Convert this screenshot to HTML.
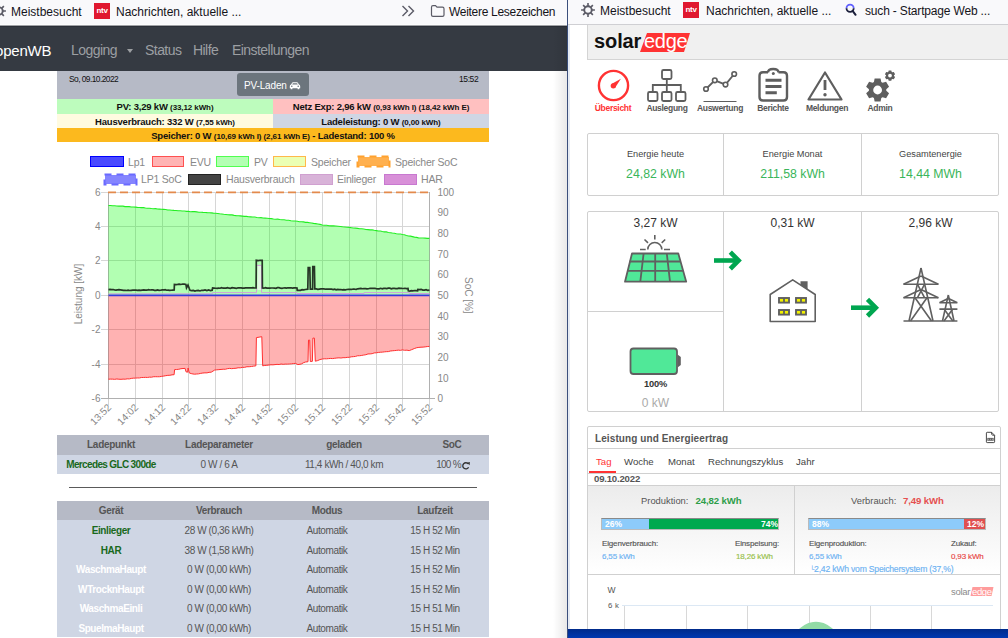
<!DOCTYPE html>
<html><head><meta charset="utf-8">
<style>
*{box-sizing:border-box;margin:0;padding:0}
html,body{width:1008px;height:638px;overflow:hidden;background:#fff;font-family:"Liberation Sans",sans-serif;position:relative}
.a{position:absolute;white-space:nowrap}
.c{text-align:center}
.lg{font-size:10.5px;color:#888;line-height:12px;letter-spacing:-0.2px}
.th{text-align:center;font-size:10px;font-weight:bold;color:#555;line-height:12px;letter-spacing:-0.3px}
.td{text-align:center;font-size:10px;color:#555;line-height:12px;letter-spacing:-0.4px}
.nl{text-align:center;font-size:8.5px;font-weight:bold;color:#555;letter-spacing:-0.3px}
.et{text-align:center;font-size:9.2px;color:#444}
.ev{text-align:center;font-size:12.3px;color:#3ab55a}
.pw{text-align:center;font-size:12px;color:#333}
.tb{font-size:9.6px;color:#444}
.bp{font-size:8.5px;font-weight:bold;color:#fff;line-height:10px}
.sm{font-size:8px;color:#444;letter-spacing:-0.15px;-webkit-text-stroke:0.15px currentColor}
.nv{top:42px;color:#9c9fa2;font-size:14px;letter-spacing:-0.55px}
.ir{font-size:9.5px;font-weight:bold;color:#111;letter-spacing:-0.2px;overflow:hidden}
.ir span{font-size:8px;letter-spacing:-0.1px}
.bm{background:#f9f9fb;color:#15141a;font-size:12px}
</style></head><body>

<!-- ============ LEFT WINDOW ============ -->
<div class="a bm" style="left:0;top:0;width:567px;height:25px;border-bottom:1px solid #fdfdfd"></div>
<!-- gear partial -->
<svg class="a" style="left:-9px;top:3px" width="16" height="16" viewBox="0 0 16 16"><circle cx="8" cy="8" r="3.75" fill="none" stroke="#5b5b66" stroke-width="1.9"/><path d="M12.00 8.00L14.90 8.00 M10.83 10.83L12.88 12.88 M8.00 12.00L8.00 14.90 M5.17 10.83L3.12 12.88 M4.00 8.00L1.10 8.00 M5.17 5.17L3.12 3.12 M8.00 4.00L8.00 1.10 M10.83 5.17L12.88 3.12" stroke="#5b5b66" stroke-width="1.6"/></svg>
<div class="a bm" style="left:11px;top:5px;font-size:12px;background:none">Meistbesucht</div>
<div class="a" style="left:94px;top:3px;width:16px;height:16px;background:#e0182f;color:#fff;font-size:8px;font-weight:bold;text-align:center;line-height:16px;letter-spacing:-0.3px">ntv</div>
<div class="a bm" style="left:116px;top:5px;background:none">Nachrichten, aktuelle ...</div>
<svg class="a" style="left:401px;top:5px" width="15" height="12" viewBox="0 0 15 12"><path d="M1.5 1 L6.5 6 L1.5 11 M7.5 1 L12.5 6 L7.5 11" fill="none" stroke="#5b5b66" stroke-width="1.4"/></svg>
<svg class="a" style="left:430px;top:5px" width="15" height="12" viewBox="0 0 15 12"><path d="M1.5 2.2 Q1.5 0.7 3 0.7 L5.5 0.7 L7 2.2 L12.5 2.2 Q14 2.2 14 3.7 L14 10 Q14 11.3 12.5 11.3 L3 11.3 Q1.5 11.3 1.5 10 Z" fill="none" stroke="#5b5b66" stroke-width="1.2"/></svg>
<div class="a bm" style="left:449px;top:5px;background:none;letter-spacing:-0.3px">Weitere Lesezeichen</div>

<!-- navbar -->
<div class="a" style="left:0;top:25px;width:567px;height:46px;background:#353a42;border-top:1px solid #a0a2a6;box-shadow:inset 0 1px 0 #2b2f37"></div>
<div class="a" style="left:-5px;top:42px;color:#fff;font-size:15px;letter-spacing:-0.2px">openWB</div>
<div class="a nv" style="left:71px">Logging</div>
<div class="a" style="left:127px;top:49px;width:0;height:0;border-left:3px solid transparent;border-right:3px solid transparent;border-top:4px solid #9c9fa2"></div>
<div class="a nv" style="left:145px">Status</div>
<div class="a nv" style="left:193px">Hilfe</div>
<div class="a nv" style="left:232px">Einstellungen</div>

<!-- openWB info header -->
<div class="a" style="left:57px;top:71px;width:432px;height:28px;background:#b6bac6"></div>
<div class="a" style="left:69px;top:73.5px;font-size:8.4px;color:#111;letter-spacing:-0.55px">So, 09.10.2022</div>
<div class="a" style="left:459px;top:74px;font-size:8.5px;color:#111;letter-spacing:-0.4px">15:52</div>
<div class="a" style="left:237px;top:73px;width:72px;height:23px;background:#6c757d;border-radius:3px"></div>
<div class="a" style="left:244px;top:79.7px;color:#fff;font-size:10px;letter-spacing:-0.15px">PV-Laden</div>
<svg class="a" style="left:289px;top:82px" width="12" height="8" viewBox="0 0 12 8"><path d="M2.1 2.6L3.1 0.8Q3.4 0.3 4 0.3H8Q8.6 0.3 8.9 0.8L9.9 2.6Q11.2 3 11.2 4.2V6.2H10.3V7.2H8.6V6.2H3.4V7.2H1.7V6.2H0.8V4.2Q0.8 3 2.1 2.6ZM3.2 2.5H8.8L8.1 1.2H3.9ZM2.8 3.5A0.8 0.8 0 1 0 2.8 5.1A0.8 0.8 0 1 0 2.8 3.5ZM9.2 3.5A0.8 0.8 0 1 0 9.2 5.1A0.8 0.8 0 1 0 9.2 3.5Z" fill="#fff" fill-rule="evenodd"/></svg>

<div class="a c ir" style="left:57px;top:99px;width:216px;height:15px;background:#bdfcbd;line-height:16px">PV: 3,29 kW <span>(33,12 kWh)</span></div>
<div class="a c ir" style="left:273px;top:99px;width:216px;height:15px;background:#ffc0c0;line-height:16px">Netz Exp: 2,96 kW <span>(0,93 kWh I) (18,42 kWh E)</span></div>
<div class="a c ir" style="left:57px;top:114px;width:216px;height:14px;background:#fffbe0;line-height:15px">Hausverbrauch: 332 W <span>(7,55 kWh)</span></div>
<div class="a c ir" style="left:273px;top:114px;width:216px;height:14px;background:#cfd6e4;line-height:15px">Ladeleistung: 0 W <span>(0,00 kWh)</span></div>
<div class="a c ir" style="left:57px;top:128px;width:432px;height:14px;background:#fcb91e;line-height:15px">Speicher: 0 W <span>(10,69 kWh I) (2,61 kWh E)</span> - Ladestand: 100 %</div>

<!-- legend -->
<div class="a" style="left:90px;top:156px;width:34px;height:11px;background:#4a4aff;border:1px solid #0000ff"></div>
<div class="a lg" style="left:128px;top:156px">Lp1</div>
<div class="a" style="left:152px;top:156px;width:32px;height:11px;background:#ffb3b3;border:1px solid #ff5050"></div>
<div class="a lg" style="left:190px;top:156px">EVU</div>
<div class="a" style="left:216px;top:156px;width:33px;height:11px;background:#b3ffb3;border:1px solid #50ff50"></div>
<div class="a lg" style="left:254px;top:156px">PV</div>
<div class="a" style="left:273px;top:156px;width:33px;height:11px;background:#ebffb3;border:1px solid #ffb84a"></div>
<div class="a lg" style="left:311px;top:156px">Speicher</div>
<svg class="a" style="left:356px;top:155px" width="35" height="13" viewBox="0 0 35 13"><rect x="2" y="2" width="31" height="9" fill="#ffb04f"/><rect x="1.5" y="1.5" width="32" height="10" fill="none" stroke="#ffa12e" stroke-width="2" stroke-dasharray="7 5"/></svg>
<div class="a lg" style="left:395px;top:156px">Speicher SoC</div>
<svg class="a" style="left:103px;top:173px" width="35" height="13" viewBox="0 0 35 13"><rect x="2" y="2" width="31" height="9" fill="#8585ff"/><rect x="1.5" y="1.5" width="32" height="10" fill="none" stroke="#6a6aff" stroke-width="2" stroke-dasharray="7 5"/></svg>
<div class="a lg" style="left:141px;top:173px">LP1 SoC</div>
<div class="a" style="left:188px;top:174px;width:33px;height:11px;background:#444;border:1px solid #222"></div>
<div class="a lg" style="left:226px;top:173px">Hausverbrauch</div>
<div class="a" style="left:300px;top:174px;width:33px;height:11px;background:#d8b3d8;border:1px solid #d0a0d0"></div>
<div class="a lg" style="left:337px;top:173px">Einlieger</div>
<div class="a" style="left:384px;top:174px;width:33px;height:11px;background:#d890d8;border:1px solid #c878d0"></div>
<div class="a lg" style="left:421px;top:173px">HAR</div>

<!-- table 1 -->
<div class="a" style="left:57px;top:435px;width:432px;height:20px;background:#b6bac6"></div>
<div class="a" style="left:57px;top:455px;width:432px;height:19px;background:#cfd6e4"></div>
<div class="a th" style="left:61px;top:439px;width:100px">Ladepunkt</div>
<div class="a th" style="left:169px;top:439px;width:100px">Ladeparameter</div>
<div class="a th" style="left:294px;top:439px;width:100px">geladen</div>
<div class="a th" style="left:402px;top:439px;width:100px">SoC</div>
<div class="a td" style="left:61px;top:459px;width:100px;color:#19691c;font-weight:bold;letter-spacing:-0.65px">Mercedes GLC 300de</div>
<div class="a td" style="left:169px;top:459px;width:100px">0 W / 6 A</div>
<div class="a td" style="left:294px;top:459px;width:100px">11,4 kWh / 40,0 km</div>
<div class="a td" style="left:360px;top:459px;width:101px;text-align:right;letter-spacing:-0.7px">100 %</div>
<svg class="a" style="left:461px;top:461px" width="10" height="9" viewBox="0 0 10 9"><path d="M7.3 2.9A3.1 3.1 0 1 0 7.6 6.3" fill="none" stroke="#333" stroke-width="1.3"/><path d="M5.9 1.7L8.9 1L8.6 4.3Z" fill="#333"/></svg>
<div class="a" style="left:69px;top:487px;width:408px;height:1px;background:#5a5a5a"></div>

<!-- table 2 -->
<div class="a" style="left:57px;top:501px;width:432px;height:19px;background:#b6bac6"></div>
<div class="a" style="left:57px;top:520px;width:432px;height:117px;background:#cfd6e4"></div>
<div class="a th" style="left:61px;top:505px;width:100px">Gerät</div>
<div class="a th" style="left:169px;top:505px;width:100px">Verbrauch</div>
<div class="a th" style="left:277px;top:505px;width:100px">Modus</div>
<div class="a th" style="left:385px;top:505px;width:100px">Laufzeit</div>
<div class="a td" style="left:61px;top:525.0px;width:100px;color:#19691c;font-weight:bold">Einlieger</div>
<div class="a td" style="left:169px;top:525.0px;width:100px">28 W (0,36 kWh)</div>
<div class="a td" style="left:277px;top:525.0px;width:100px">Automatik</div>
<div class="a td" style="left:385px;top:525.0px;width:100px">15 H 52 Min</div>
<div class="a td" style="left:61px;top:544.5px;width:100px;color:#19691c;font-weight:bold">HAR</div>
<div class="a td" style="left:169px;top:544.5px;width:100px">38 W (1,58 kWh)</div>
<div class="a td" style="left:277px;top:544.5px;width:100px">Automatik</div>
<div class="a td" style="left:385px;top:544.5px;width:100px">15 H 52 Min</div>
<div class="a td" style="left:61px;top:564.0px;width:100px;color:#fff;font-weight:bold">WaschmaHaupt</div>
<div class="a td" style="left:169px;top:564.0px;width:100px">0 W (0,00 kWh)</div>
<div class="a td" style="left:277px;top:564.0px;width:100px">Automatik</div>
<div class="a td" style="left:385px;top:564.0px;width:100px">15 H 52 Min</div>
<div class="a td" style="left:61px;top:583.5px;width:100px;color:#fff;font-weight:bold">WTrocknHaupt</div>
<div class="a td" style="left:169px;top:583.5px;width:100px">0 W (0,00 kWh)</div>
<div class="a td" style="left:277px;top:583.5px;width:100px">Automatik</div>
<div class="a td" style="left:385px;top:583.5px;width:100px">15 H 52 Min</div>
<div class="a td" style="left:61px;top:603.0px;width:100px;color:#fff;font-weight:bold">WaschmaEinli</div>
<div class="a td" style="left:169px;top:603.0px;width:100px">0 W (0,00 kWh)</div>
<div class="a td" style="left:277px;top:603.0px;width:100px">Automatik</div>
<div class="a td" style="left:385px;top:603.0px;width:100px">15 H 51 Min</div>
<div class="a td" style="left:61px;top:622.5px;width:100px;color:#fff;font-weight:bold">SpuelmaHaupt</div>
<div class="a td" style="left:169px;top:622.5px;width:100px">0 W (0,00 kWh)</div>
<div class="a td" style="left:277px;top:622.5px;width:100px">Automatik</div>
<div class="a td" style="left:385px;top:622.5px;width:100px">15 H 51 Min</div>

<!--CHART-->
<svg class="a" style="left:57px;top:145px" width="432" height="290" viewBox="57 145 432 290" font-family="Liberation Sans" shape-rendering="auto">
<path d="M108.5 192V405 M135.5 192V405 M162.5 192V405 M188.5 192V405 M215.5 192V405 M242.5 192V405 M269.5 192V405 M295.5 192V405 M322.5 192V405 M349.5 192V405 M376.5 192V405 M402.5 192V405 M429.5 192V405 M101 192.5H429.5 M101 226.5H429.5 M101 260.5H429.5 M101 295.5H429.5 M101 329.5H429.5 M101 364.5H429.5 M101 398.5H429.5" stroke="#d6d6d6" stroke-width="1" fill="none" shape-rendering="crispEdges"/>
<path d="M108.5 192V398.5M429.5 192V398.5M101 398.5H435" stroke="#b0b0b0" stroke-width="1" fill="none" shape-rendering="crispEdges"/>
<path d="M108.5 295.25 L108.4 205.5 L135.4 207.1 L161.5 209.3 L188.5 211.4 L215.5 213.2 L242.4 216.1 L269.2 218.5 L281.9 219.7 L295.4 221 L315.6 223.6 L322.3 225 L335.8 226 L349.3 227.4 L376.3 230.6 L402.4 234.5 L418.5 237.9 L429.4 238.4 L429.5 295.25Z" fill="rgba(0,255,0,0.3)"/>
<path d="M108.4 205.5 L110.48 205.52 L112.55 205.76 L114.63 205.82 L116.71 206.03 L118.78 206.17 L120.86 206.06 L122.94 206.17 L125.02 206.62 L127.09 206.51 L129.17 206.62 L131.25 207.05 L133.32 206.97 L135.4 207.1 L137.41 207.4 L139.42 207.43 L141.42 207.66 L143.43 207.64 L145.44 208.0 L147.45 208.26 L149.45 208.29 L151.46 208.55 L153.47 208.69 L155.48 208.62 L157.48 209.06 L159.49 209.17 L161.5 209.3 L163.58 209.38 L165.65 209.44 L167.73 209.93 L169.81 209.94 L171.88 210.2 L173.96 210.42 L176.04 210.52 L178.12 210.76 L180.19 210.71 L182.27 211.04 L184.35 211.05 L186.42 211.41 L188.5 211.4 L190.58 211.69 L192.65 211.52 L194.73 211.67 L196.81 211.84 L198.88 212.28 L200.96 212.21 L203.04 212.42 L205.12 212.43 L207.19 212.65 L209.27 212.74 L211.35 212.86 L213.42 213.1 L215.5 213.2 L217.57 213.46 L219.64 213.81 L221.71 213.94 L223.78 214.26 L225.85 214.46 L227.92 214.73 L229.98 214.83 L232.05 214.85 L234.12 215.35 L236.19 215.62 L238.26 215.82 L240.33 215.9 L242.4 216.1 L244.46 216.37 L246.52 216.35 L248.58 216.79 L250.65 216.87 L252.71 216.94 L254.77 217.03 L256.83 217.53 L258.89 217.77 L260.95 217.6 L263.02 218.07 L265.08 218.09 L267.14 218.18 L269.2 218.5 L271.32 218.62 L273.43 219.01 L275.55 219.25 L277.67 219.12 L279.78 219.55 L281.9 219.7 L284.15 219.73 L286.4 220.22 L288.65 220.28 L290.9 220.72 L293.15 220.98 L295.4 221 L297.42 221.26 L299.44 221.72 L301.46 221.7 L303.48 221.87 L305.5 222.34 L307.52 222.37 L309.54 222.7 L311.56 223.04 L313.58 223.38 L315.6 223.6 L317.83 223.93 L320.07 224.35 L322.3 225 L324.55 225.31 L326.8 225.26 L329.05 225.68 L331.3 225.83 L333.55 225.78 L335.8 226 L338.05 226.22 L340.3 226.47 L342.55 226.76 L344.8 226.97 L347.05 227.19 L349.3 227.4 L351.38 227.69 L353.45 228.07 L355.53 228.14 L357.61 228.36 L359.68 228.72 L361.76 228.77 L363.84 229.04 L365.92 229.56 L367.99 229.62 L370.07 229.88 L372.15 229.91 L374.22 230.32 L376.3 230.6 L378.31 230.93 L380.32 231.01 L382.32 231.55 L384.33 231.85 L386.34 231.92 L388.35 232.45 L390.35 232.69 L392.36 233.07 L394.37 233.24 L396.38 233.68 L398.38 234.0 L400.39 234.01 L402.4 234.5 L404.41 234.75 L406.42 235.42 L408.44 235.96 L410.45 236.1 L412.46 236.61 L414.48 237.09 L416.49 237.4 L418.5 237.9 L420.68 237.95 L422.86 238.03 L425.04 238.15 L427.22 238.34 L429.4 238.4" fill="none" stroke="#22ee22" stroke-width="1.1"/>
<path d="M108.5 295.25 L108.4 379.2 L125.2 379.2 L135.4 378.1 L161.5 376.4 L174.1 374.7 L174.6 369.6 L185.1 368.4 L186 371.8 L187.6 372.2 L188.1 368 L189.3 373 L194.4 374.2 L211.2 372.2 L214.6 370.1 L242.4 367.4 L255.9 365.8 L256.4 337.6 L261.8 336.7 L262.7 365.8 L275 364.6 L295.4 363.4 L297.9 364.6 L301.3 364 L305.5 362 L308 361.7 L308.5 340.1 L309.7 340.1 L310.3 361.5 L312.4 361.3 L312.9 338.1 L314.4 338.1 L315.3 361.2 L322.3 359 L349.3 357.3 L376.3 352.8 L402.4 349.9 L409.2 350.6 L416.8 347.7 L429.4 346.4 L429.5 295.25Z" fill="rgba(255,0,0,0.3)"/>
<path d="M108.4 379.2 L110.5 379.1 L112.6 379.14 L114.7 379.34 L116.8 378.96 L118.9 379.23 L121.0 379.32 L123.1 379.11 L125.2 379.2 L127.24 378.84 L129.28 378.91 L131.32 378.41 L133.36 378.16 L135.4 378.1 L137.41 377.94 L139.42 377.94 L141.42 377.51 L143.43 377.49 L145.44 377.36 L147.45 377.48 L149.45 377.15 L151.46 377.23 L153.47 376.76 L155.48 376.71 L157.48 376.74 L159.49 376.72 L161.5 376.4 L163.6 376.09 L165.7 375.7 L167.8 375.36 L169.9 375.28 L172.0 374.83 L174.1 374.7 L174.6 369.6 L176.7 369.51 L178.8 369.29 L180.9 368.72 L183.0 368.53 L185.1 368.4 L186 371.8 L187.6 372.2 L188.1 368 L189.3 373 L191.85 373.75 L194.4 374.2 L196.5 374.02 L198.6 373.85 L200.7 373.37 L202.8 373.01 L204.9 372.85 L207.0 372.85 L209.1 372.34 L211.2 372.2 L214.6 370.1 L216.74 369.82 L218.88 369.64 L221.02 369.44 L223.15 369.22 L225.29 369.27 L227.43 368.68 L229.57 368.4 L231.71 368.66 L233.85 368.42 L235.98 368.27 L238.12 367.78 L240.26 367.83 L242.4 367.4 L244.65 367.35 L246.9 366.73 L249.15 366.72 L251.4 366.5 L253.65 366.15 L255.9 365.8 L256.4 337.6 L259.1 337.16 L261.8 336.7 L262.7 365.8 L264.75 365.49 L266.8 365.32 L268.85 365.06 L270.9 364.78 L272.95 364.84 L275 364.6 L277.04 364.37 L279.08 364.52 L281.12 364.01 L283.16 364.32 L285.2 364.1 L287.24 364.09 L289.28 363.96 L291.32 363.84 L293.36 363.56 L295.4 363.4 L297.9 364.6 L301.3 364 L303.4 362.76 L305.5 362 L308 361.7 L308.5 340.1 L309.7 340.1 L310.3 361.5 L312.4 361.3 L312.9 338.1 L314.4 338.1 L315.3 361.2 L317.63 360.59 L319.97 359.57 L322.3 359 L324.38 358.77 L326.45 358.82 L328.53 358.62 L330.61 358.43 L332.68 358.57 L334.76 358.27 L336.84 358.01 L338.92 357.83 L340.99 358.0 L343.07 357.68 L345.15 357.7 L347.22 357.36 L349.3 357.3 L351.38 356.8 L353.45 356.63 L355.53 356.42 L357.61 355.75 L359.68 355.72 L361.76 355.43 L363.84 355.03 L365.92 354.69 L367.99 353.94 L370.07 353.9 L372.15 353.67 L374.22 352.92 L376.3 352.8 L378.31 352.46 L380.32 352.24 L382.32 352.14 L384.33 351.87 L386.34 351.67 L388.35 351.6 L390.35 350.99 L392.36 350.79 L394.37 350.61 L396.38 350.38 L398.38 350.13 L400.39 350.36 L402.4 349.9 L404.67 350.31 L406.93 350.16 L409.2 350.6 L411.73 349.63 L414.27 348.57 L416.8 347.7 L418.9 347.39 L421.0 347.19 L423.1 347.12 L425.2 346.88 L427.3 346.55 L429.4 346.4" fill="none" stroke="#ff3030" stroke-width="1"/>
<rect x="257.5" y="265" width="3.5" height="25" fill="#e2f6e2"/>
<path d="M108.5 293.8 L212.4 293.8 L212.4 292.6 L256.5 292.6 L256.5 265.4 L261.5 265.4 L261.5 292.6 L297 292.6 L297 293.5 L364 293.5 L364 292.6 L409.3 292.6 L409.3 293.5 L429.5 293.5" fill="none" stroke="#d0a0d8" stroke-width="1"/>
<path d="M108.5 295.3H429.5" stroke="#3838e0" stroke-width="1.7" fill="none"/>
<path d="M108.5 289.6 L110.0 289.42 L111.5 289.59 L113.0 289.49 L114.5 289.9 L116.0 290.09 L117.5 289.89 L119.0 289.71 L120.5 289.85 L122.0 290.07 L123.5 290.32 L125 290.3 L126.56 290.51 L128.12 290.17 L129.69 290.48 L131.25 290.32 L132.81 290.15 L134.38 290.09 L135.94 290.17 L137.5 290.31 L139.06 290.07 L140.62 290.27 L142.19 290.06 L143.75 289.87 L145.31 290.08 L146.88 290.19 L148.44 289.68 L150 290 L151.51 289.94 L153.03 289.94 L154.54 290.3 L156.05 290.35 L157.56 289.9 L159.07 290.32 L160.59 290.23 L162.1 289.81 L163.61 289.97 L165.12 289.7 L166.64 290.25 L168.15 290.13 L169.66 290.31 L171.17 290.23 L172.69 290.13 L174.2 290 L174.4 284.4 L176.04 284.59 L177.69 284.45 L179.33 284.08 L180.97 284.47 L182.61 284.0 L184.26 284.11 L185.9 284.4 L186.5 287.9 L188 285 L189.3 288.5 L190 290.2 L191.67 290.69 L193.33 290.37 L195 291 L196.66 290.55 L198.32 290.44 L199.98 290.94 L201.64 290.26 L203.3 290.4 L205.08 289.98 L206.86 290.59 L208.64 289.98 L210.42 290.52 L212.2 290.2 L212.6 288 L214.1 288.14 L215.6 288.27 L217.1 288.36 L218.6 288.06 L220.1 288.24 L221.6 287.63 L223.1 288.21 L224.6 288.01 L226.1 288.17 L227.6 287.69 L229.1 288.2 L230.6 288.35 L232.1 287.65 L233.6 287.86 L235.1 288.05 L236.6 288.26 L238.1 287.79 L239.6 287.74 L241.1 287.8 L242.6 288.09 L244.1 288.2 L245.6 287.91 L247.1 287.89 L248.6 287.92 L250.1 287.88 L251.6 287.93 L253.1 287.67 L254.6 288.0 L256.1 288 L256.3 260.3 L258.27 260.68 L260.23 260.23 L262.2 260.3 L262.4 288 L263.9 288.2 L265.41 287.73 L266.91 288.15 L268.42 288.2 L269.92 288.14 L271.43 288.01 L272.93 287.99 L274.43 288.11 L275.94 288.32 L277.44 287.72 L278.95 287.68 L280.45 288.2 L281.96 288.33 L283.46 288.01 L284.97 287.95 L286.47 288.18 L287.97 287.75 L289.48 287.81 L290.98 287.76 L292.49 288.07 L293.99 287.85 L295.5 287.79 L297 288 L297.2 290.4 L298.84 290.37 L300.48 290.4 L302.12 289.7 L303.76 289.84 L305.4 289.5 L307.8 289.2 L308.2 267.5 L309.8 267.5 L310.3 289.2 L312.6 289.2 L312.8 266.5 L314.4 266.5 L314.8 289 L316.33 288.96 L317.85 289.35 L319.38 289.16 L320.91 288.94 L322.43 288.93 L323.96 288.81 L325.48 289.2 L327.01 289.16 L328.54 289.02 L330.06 289.2 L331.59 289.21 L333.12 289.6 L334.64 289.13 L336.17 289.84 L337.69 289.46 L339.22 289.58 L340.75 289.51 L342.27 289.84 L343.8 289.6 L345.35 289.77 L346.91 289.48 L348.46 289.33 L350.02 289.44 L351.57 289.46 L353.12 289.01 L354.68 289.19 L356.23 289.29 L357.78 288.81 L359.34 288.54 L360.89 288.46 L362.45 288.76 L364 288.5 L365.52 288.64 L367.03 288.87 L368.55 288.78 L370.07 288.29 L371.59 288.25 L373.1 288.31 L374.62 288.25 L376.14 288.66 L377.66 288.79 L379.17 288.82 L380.69 288.3 L382.21 288.79 L383.72 288.35 L385.24 288.44 L386.76 288.68 L388.28 288.17 L389.79 288.17 L391.31 288.77 L392.83 288.33 L394.34 288.39 L395.86 288.56 L397.38 288.64 L398.9 288.11 L400.41 288.37 L401.93 288.45 L403.45 288.49 L404.97 288.27 L406.48 288.57 L408 288.5 L408.3 290.8 L409.85 291.16 L411.4 290.71 L412.95 290.84 L414.5 290.5 L416.05 290.62 L417.6 290.8 L417.9 289.4 L419.54 289.65 L421.19 289.32 L422.83 290.05 L424.47 290.18 L426.11 289.65 L427.76 290.44 L429.4 290.2" fill="none" stroke="#263626" stroke-width="1.7"/>
<path d="M108 192.3H429.5" stroke="#e38a4c" stroke-width="1.7" stroke-dasharray="8 4" fill="none"/>
<text x="100.5" y="195.6" text-anchor="end" font-size="10" fill="#888">6</text>
<text x="100.5" y="230.0" text-anchor="end" font-size="10" fill="#888">4</text>
<text x="100.5" y="264.40000000000003" text-anchor="end" font-size="10" fill="#888">2</text>
<text x="100.5" y="298.8" text-anchor="end" font-size="10" fill="#888">0</text>
<text x="100.5" y="333.3" text-anchor="end" font-size="10" fill="#888">-2</text>
<text x="100.5" y="367.70000000000005" text-anchor="end" font-size="10" fill="#888">-4</text>
<text x="100.5" y="402.1" text-anchor="end" font-size="10" fill="#888">-6</text>
<text x="437.5" y="402.1" font-size="10" fill="#888">0</text>
<text x="437.5" y="381.5" font-size="10" fill="#888">10</text>
<text x="437.5" y="360.8" font-size="10" fill="#888">20</text>
<text x="437.5" y="340.2" font-size="10" fill="#888">30</text>
<text x="437.5" y="319.5" font-size="10" fill="#888">40</text>
<text x="437.5" y="298.9" font-size="10" fill="#888">50</text>
<text x="437.5" y="278.2" font-size="10" fill="#888">60</text>
<text x="437.5" y="257.6" font-size="10" fill="#888">70</text>
<text x="437.5" y="236.9" font-size="10" fill="#888">80</text>
<text x="437.5" y="216.2" font-size="10" fill="#888">90</text>
<text x="437.5" y="195.6" font-size="10" fill="#888">100</text>
<text transform="translate(107.0,403) rotate(-45)" text-anchor="end" font-size="10" fill="#888" dy="7">13:52</text>
<text transform="translate(134.0,403) rotate(-45)" text-anchor="end" font-size="10" fill="#888" dy="7">14:02</text>
<text transform="translate(161.0,403) rotate(-45)" text-anchor="end" font-size="10" fill="#888" dy="7">14:12</text>
<text transform="translate(187.0,403) rotate(-45)" text-anchor="end" font-size="10" fill="#888" dy="7">14:22</text>
<text transform="translate(214.0,403) rotate(-45)" text-anchor="end" font-size="10" fill="#888" dy="7">14:32</text>
<text transform="translate(241.0,403) rotate(-45)" text-anchor="end" font-size="10" fill="#888" dy="7">14:42</text>
<text transform="translate(268.0,403) rotate(-45)" text-anchor="end" font-size="10" fill="#888" dy="7">14:52</text>
<text transform="translate(294.0,403) rotate(-45)" text-anchor="end" font-size="10" fill="#888" dy="7">15:02</text>
<text transform="translate(321.0,403) rotate(-45)" text-anchor="end" font-size="10" fill="#888" dy="7">15:12</text>
<text transform="translate(348.0,403) rotate(-45)" text-anchor="end" font-size="10" fill="#888" dy="7">15:22</text>
<text transform="translate(375.0,403) rotate(-45)" text-anchor="end" font-size="10" fill="#888" dy="7">15:32</text>
<text transform="translate(401.0,403) rotate(-45)" text-anchor="end" font-size="10" fill="#888" dy="7">15:42</text>
<text transform="translate(428.0,403) rotate(-45)" text-anchor="end" font-size="10" fill="#888" dy="7">15:52</text>
<text transform="translate(82.3,294) rotate(-90)" text-anchor="middle" font-size="10" fill="#888">Leistung [kW]</text>
<text transform="translate(464.5,295.3) rotate(90)" text-anchor="middle" font-size="10" fill="#888">SoC [%]</text>
</svg>
<!--/CHART-->

<!-- shadow + border -->
<div class="a" style="left:553px;top:26px;width:14px;height:612px;background:linear-gradient(to right,rgba(0,0,0,0),rgba(0,0,0,0.09))"></div>
<div class="a" style="left:567px;top:0;width:1px;height:638px;background:#3b4f7c"></div>

<!-- ============ RIGHT WINDOW ============ -->
<div class="a" style="left:568px;top:0;width:440px;height:638px;background:#fff"></div>
<div class="a bm" style="left:568px;top:0;width:440px;height:25px;border-bottom:1px solid #cfcfd3"></div>
<div class="a" style="left:568px;top:25px;width:2px;height:604px;background:#e6ebf3"></div>


<!-- right bookmarks -->
<svg class="a" style="left:580px;top:2px" width="16" height="16" viewBox="0 0 16 16"><circle cx="8" cy="8" r="3.75" fill="none" stroke="#5b5b66" stroke-width="1.9"/><path d="M12.00 8.00L14.90 8.00 M10.83 10.83L12.88 12.88 M8.00 12.00L8.00 14.90 M5.17 10.83L3.12 12.88 M4.00 8.00L1.10 8.00 M5.17 5.17L3.12 3.12 M8.00 4.00L8.00 1.10 M10.83 5.17L12.88 3.12" stroke="#5b5b66" stroke-width="1.6"/></svg>
<div class="a bm" style="left:600px;top:4px;background:none">Meistbesucht</div>
<div class="a" style="left:683px;top:2px;width:16px;height:16px;background:#e0182f;color:#fff;font-size:8px;font-weight:bold;text-align:center;line-height:16px;letter-spacing:-0.3px">ntv</div>
<div class="a bm" style="left:706px;top:4px;background:none">Nachrichten, aktuelle ...</div>
<svg class="a" style="left:844px;top:2px" width="14" height="16" viewBox="844 2 14 16"><path d="M846.5 8.3A3.6 3.6 0 0 1 853.7 8.3" fill="none" stroke="#5f5fff" stroke-width="1.8"/><path d="M846.5 8.3A3.6 3.6 0 0 0 853.7 8.3" fill="none" stroke="#1b1f3b" stroke-width="1.8"/><path d="M852.6 10.8L855.6 14.8" stroke="#1b1f3b" stroke-width="2" stroke-linecap="round"/></svg>
<div class="a bm" style="left:865px;top:4px;background:none;letter-spacing:-0.17px">such - Startpage Web ...</div>

<!-- solaredge header -->
<div class="a" style="left:587px;top:25px;width:430px;height:35px;background:#f0f0f0;border-left:1px solid #d4d4d4;border-bottom:1px solid #d4d4d4"></div>
<div class="a" style="left:594px;top:29.5px;font-size:20px;font-weight:bold;color:#111;letter-spacing:-0.1px">solar</div>
<svg class="a" style="left:640px;top:32px" width="52" height="21" viewBox="0 0 52 21"><path d="M7 1H50L44 20H0Z" fill="#f33"/></svg>
<div class="a" style="left:644px;top:29.5px;font-size:20px;color:#fff;letter-spacing:-0.3px">edge</div>

<!-- nav icons -->
<svg class="a" style="left:590px;top:64px" width="310" height="40" viewBox="590 64 310 40">
 <circle cx="613.5" cy="85.5" r="14.6" fill="none" stroke="#f33" stroke-width="2.4"/>
 <path d="M611.5 83.9 L620.9 78.7 L615.1 87.7 Z" fill="#f33"/><circle cx="613.3" cy="85.8" r="2.65" fill="#f33"/>
 <g fill="none" stroke="#5e5e5e" stroke-width="1.8">
  <rect x="662" y="70" width="9.5" height="9" rx="1.5"/>
  <rect x="648" y="92" width="9.5" height="9" rx="1.5"/>
  <rect x="662" y="92" width="9.5" height="9" rx="1.5"/>
  <rect x="676" y="92" width="9.5" height="9" rx="1.5"/>
  <path d="M666.8 79V92 M652.8 92V85H680.8V92"/>
  <path d="M706 89 L714.8 80.3 L725.5 84.6 L734.2 74"/>
 </g>
 <g fill="#fff" stroke="#5e5e5e" stroke-width="1.6">
  <circle cx="706" cy="89" r="2.3"/><circle cx="714.8" cy="80.3" r="2.3"/><circle cx="725.5" cy="84.6" r="2.3"/><circle cx="734.2" cy="74" r="2.3"/>
 </g>
 <path d="M703.5 101.5H736.5" stroke="#5e5e5e" stroke-width="1"/>
 <g fill="none" stroke="#5e5e5e" stroke-width="2">
  <path d="M768 72.2H763Q759.5 72.2 759.5 75.7V97Q759.5 100.5 763 100.5H783.5Q787 100.5 787 97V75.7Q787 72.2 783.5 72.2H778.5" stroke-width="2.4"/>
  <path d="M768 72.5Q768 69 773.2 69Q778.5 69 778.5 72.5" stroke-width="2.4"/>
  <path d="M765.5 80.3H781.5M765.5 86.5H781.5M765.5 92.8H776.8" stroke-width="3"/>
  <path d="M825 72.5 L841.5 99.5 H808.5 Z" stroke-width="2.2" stroke-linejoin="round"/>
  <path d="M825 80V90" stroke-width="2.8"/>
 </g>
 <circle cx="773.3" cy="73.4" r="1.5" fill="#5e5e5e"/>
 <circle cx="825" cy="94.8" r="1.7" fill="#5e5e5e"/>
</svg>
<div class="a nl" style="left:583px;top:102.5px;width:60px;color:#f33">Übersicht</div>
<div class="a nl" style="left:637px;top:102.5px;width:60px">Auslegung</div>
<div class="a nl" style="left:690px;top:102.5px;width:60px">Auswertung</div>
<div class="a nl" style="left:743px;top:102.5px;width:60px">Berichte</div>
<div class="a nl" style="left:797px;top:102.5px;width:60px">Meldungen</div>
<div class="a nl" style="left:850px;top:102.5px;width:60px">Admin</div>

<!-- energy box -->
<div class="a" style="left:587px;top:133px;width:412px;height:63px;border:1px solid #d0d0d0;border-radius:2px"></div>
<div class="a" style="left:723px;top:134px;width:1px;height:61px;background:#d0d0d0"></div>
<div class="a" style="left:861px;top:134px;width:1px;height:61px;background:#d0d0d0"></div>
<div class="a et" style="left:588px;top:148.5px;width:135px">Energie heute</div>
<div class="a et" style="left:724px;top:148.5px;width:137px">Energie Monat</div>
<div class="a et" style="left:862px;top:148.5px;width:137px">Gesamtenergie</div>
<div class="a ev" style="left:588px;top:166.5px;width:135px">24,82 kWh</div>
<div class="a ev" style="left:724px;top:166.5px;width:137px">211,58 kWh</div>
<div class="a ev" style="left:862px;top:166.5px;width:137px">14,44 MWh</div>

<!-- power flow box -->
<div class="a" style="left:587px;top:211px;width:412px;height:201px;border:1px solid #d0d0d0;border-radius:2px"></div>
<div class="a" style="left:723px;top:212px;width:1px;height:199px;background:#d0d0d0"></div>
<div class="a" style="left:861px;top:212px;width:1px;height:199px;background:#d0d0d0"></div>
<div class="a" style="left:588px;top:311px;width:135px;height:1px;background:#d0d0d0"></div>
<div class="a pw" style="left:588px;top:216px;width:135px">3,27 kW</div>
<div class="a pw" style="left:724px;top:216px;width:137px">0,31 kW</div>
<div class="a pw" style="left:862px;top:216px;width:137px">2,96 kW</div>
<div class="a pw" style="left:588px;top:396px;width:135px;color:#aaa">0 kW</div>
<div class="a" style="left:588px;top:378.5px;width:135px;text-align:center;font-size:9.3px;font-weight:bold;color:#333;letter-spacing:-0.2px">100%</div>
<svg class="a" style="left:600px;top:230px" width="370" height="150" viewBox="600 230 370 150">
 <!-- solar -->
 <g fill="none" stroke="#606060" stroke-width="1.6">
  <path d="M647.8 249.5A7 7 0 0 1 661.8 249.5"/>
  <path d="M654.8 235V239.5M640 249.5H645.7M664 249.5H670M644.5 239.5L648 242.8M665.2 239.5L661.7 242.8"/>
 </g>
 <path d="M632 253.5H678.3L686.2 281.7H625Z" fill="#50e898" stroke="#606060" stroke-width="1.8" stroke-linejoin="round"/>
 <path d="M629.5 261.5H680.8M627.3 270.8H683.5M643.6 253.5L640.3 281.7M655.2 253.5V281.7M666.8 253.5L670 281.7" stroke="#606060" stroke-width="1.8" fill="none"/>
 <!-- battery -->
 <rect x="630.5" y="348.5" width="46.5" height="25.5" rx="3" fill="#50e898" stroke="#606060" stroke-width="1.8"/>
 <path d="M677.5 354.5L680.8 357V365L677.5 367.6Z" fill="#606060"/>
 <!-- arrows -->
 <g stroke="#00a650" stroke-width="4.6" fill="none" stroke-linejoin="miter" stroke-miterlimit="10">
  <path d="M714 260.5H737"/><path d="M730.3 252.2L738.6 260.5L730.3 268.8"/>
  <path d="M851 307.7H874"/><path d="M867.5 299.4L875.8 307.7L867.5 316"/>
 </g>
 <!-- house -->
 <path d="M800.5 288V281.3H807.6V294Z" fill="#606060"/>
 <path d="M770.2 294.5L792.7 279.8L815.2 294.5V321.5H770.2Z" fill="#fff" stroke="#606060" stroke-width="1.6" stroke-linejoin="round"/>
 <g fill="#f2f200" stroke="#606060" stroke-width="1.9">
  <rect x="779" y="298" width="10" height="4.6"/><rect x="796" y="298" width="10" height="4.6"/>
  <rect x="779" y="310" width="10" height="4.6"/><rect x="796" y="310" width="10" height="4.6"/>
 </g>
 <path d="M784 298V302.6M801 298V302.6M784 310V314.6M801 310V314.6" stroke="#606060" stroke-width="1.8"/>
 <!-- pylons -->
 <g fill="none" stroke="#606060" stroke-width="1.6">
  <path d="M903.5 321H957.4"/>
  <path d="M921 268L909 321M921 268L933 321"/>
  <path d="M903.5 284.3H938.4M903.5 297.7H938.4"/>
  <path d="M903.5 284.3L921 276M938.4 284.3L921 276M903.5 297.7L921 289.5M938.4 297.7L921 289.5"/>
  <path d="M915 297.7L931.5 321M927 297.7L910.5 321M917.5 284.3L924.5 297.7M924.5 284.3L917.5 297.7"/>
  <path d="M948.3 295L942.5 321M948.3 295L954 321"/>
  <path d="M939.4 302.8H957.4M939.4 309.1H957.4M939.4 302.8L948.3 298.5L957.4 302.8M944 309.1L952.8 321M952.8 309.1L944 321"/>
 </g>
</svg>

<!-- Leistung box -->
<div class="a" style="left:587px;top:426px;width:414px;height:220px;border:1px solid #d0d0d0;border-radius:2px"></div>
<div class="a" style="left:595px;top:432.5px;font-size:10px;font-weight:bold;color:#555;letter-spacing:0.1px">Leistung und Energieertrag</div>
<svg class="a" style="left:985px;top:431px" width="11" height="13" viewBox="0 0 11 13"><path d="M2.2 1.3H6.6L9.6 4.3V10.8Q9.6 11.6 8.8 11.6H2.2Q1.4 11.6 1.4 10.8V2.1Q1.4 1.3 2.2 1.3Z" fill="#fff" stroke="#333" stroke-width="0.9"/><path d="M6.6 1.3Q6.4 3.6 7.3 4.1Q8.2 4.5 9.6 4.3" fill="none" stroke="#333" stroke-width="0.9"/><rect x="2.3" y="6.9" width="6.4" height="2.9" fill="#666"/><path d="M3 8.3h1M5 8.3h1M7 8.3h1" stroke="#bbb" stroke-width="0.8"/></svg>
<div class="a" style="left:588px;top:448px;width:413px;height:1px;background:#d0d0d0"></div>
<div class="a tb" style="left:596px;top:456.3px;color:#f33">Tag</div>
<div class="a tb" style="left:624px;top:456.3px">Woche</div>
<div class="a tb" style="left:668px;top:456.3px">Monat</div>
<div class="a tb" style="left:708px;top:456.3px">Rechnungszyklus</div>
<div class="a tb" style="left:796px;top:456.3px">Jahr</div>
<div class="a" style="left:589px;top:471px;width:27px;height:2px;background:#f33"></div>
<div class="a" style="left:588px;top:473px;width:413px;height:1px;background:#d0d0d0"></div>
<div class="a" style="left:594px;top:472.5px;font-size:9.6px;font-weight:bold;color:#555;letter-spacing:-0.2px">09.10.2022</div>
<div class="a" style="left:588px;top:485px;width:412px;height:90px;background:linear-gradient(#ececec,#fff);border-top:1px solid #d0d0d0;border-bottom:1px solid #d0d0d0"></div>
<div class="a" style="left:794px;top:486px;width:1px;height:88px;background:#d0d0d0"></div>

<svg class="a" style="left:860px;top:64px" width="40" height="40" viewBox="860 64 40 40"><path d="M873.92 82.12 L874.63 78.48 L880.57 78.48 L881.28 82.12 L882.59 82.87 L886.10 81.67 L889.06 86.81 L886.27 89.25 L886.27 90.75 L889.06 93.19 L886.10 98.33 L882.59 97.13 L881.28 97.88 L880.57 101.52 L874.63 101.52 L873.92 97.88 L872.61 97.13 L869.10 98.33 L866.14 93.19 L868.93 90.75 L868.93 89.25 L866.14 86.81 L869.10 81.67 L872.61 82.87ZM882.00 90A4.4 4.4 0 1 0 873.20 90A4.4 4.4 0 1 0 882.00 90Z" fill="#5e5e5e" fill-rule="evenodd"/><path d="M888.26 72.00 L888.71 70.46 L891.29 70.46 L891.74 72.00 L892.25 72.29 L893.81 71.91 L895.10 74.14 L893.99 75.31 L893.99 75.89 L895.10 77.06 L893.81 79.29 L892.25 78.91 L891.74 79.20 L891.29 80.74 L888.71 80.74 L888.26 79.20 L887.75 78.91 L886.19 79.29 L884.90 77.06 L886.01 75.89 L886.01 75.31 L884.90 74.14 L886.19 71.91 L887.75 72.29ZM891.90 75.6A1.9 1.9 0 1 0 888.10 75.6A1.9 1.9 0 1 0 891.90 75.6Z" fill="#5e5e5e" fill-rule="evenodd"/></svg>

<!-- produktion / verbrauch -->
<div class="a" style="left:641px;top:495px;font-size:9.4px;color:#555">Produktion:</div><div class="a" style="left:695.5px;top:495px;font-size:9.6px;font-weight:bold;color:#2e9e4a;letter-spacing:-0.1px">24,82 kWh</div>
<div class="a" style="left:851px;top:495px;font-size:9.4px;color:#555">Verbrauch:</div><div class="a" style="left:903px;top:495px;font-size:9.6px;font-weight:bold;color:#e55050;letter-spacing:-0.1px">7,49 kWh</div>
<div class="a" style="left:601px;top:518px;width:178px;height:12px;background:#00a94f;border:1px solid #bbb;border-top-color:#8a8a8a"></div>
<div class="a" style="left:602px;top:519px;width:47px;height:10px;background:#8dcbfa"></div>
<div class="a bp" style="left:605px;top:519px">26%</div>
<div class="a bp" style="left:761px;top:519px">74%</div>
<div class="a" style="left:808px;top:518px;width:178px;height:12px;background:#e05050;border:1px solid #bbb;border-top-color:#8a8a8a"></div>
<div class="a" style="left:809px;top:519px;width:155px;height:10px;background:#8dcbfa"></div>
<div class="a bp" style="left:812px;top:519px">88%</div>
<div class="a bp" style="left:967px;top:519px">12%</div>
<div class="a sm" style="left:602px;top:539px;color:#555">Eigenverbrauch:</div>
<div class="a sm" style="left:602px;top:552px;color:#6db2f2">6,55 kWh</div>
<div class="a sm" style="left:735px;top:539px;color:#555">Einspeisung:</div>
<div class="a sm" style="left:736px;top:552px;color:#96c048">18,26 kWh</div>
<div class="a sm" style="left:809px;top:539px;color:#555">Eigenproduktion:</div>
<div class="a sm" style="left:809px;top:552px;color:#6db2f2">6,55 kWh</div>
<div class="a sm" style="left:951px;top:539px;color:#555">Zukauf:</div>
<div class="a sm" style="left:951px;top:552px;color:#e84444">0,93 kWh</div>
<div class="a sm" style="left:810px;top:563.5px;color:#6db2f2;font-size:8.6px;letter-spacing:-0.2px"><span style="font-size:6px;position:relative;top:-1px">&#x2514;</span>2,42 kWh vom Speichersystem (37,%)</div>

<!-- bottom chart -->
<div class="a" style="left:607.5px;top:585px;font-size:8.5px;color:#555">W</div>
<div class="a" style="left:608px;top:600.5px;font-size:7.8px;color:#555;letter-spacing:0.2px">6 k</div>
<svg class="a" style="left:588px;top:575px" width="412" height="54" viewBox="588 575 412 54">
 <path d="M622 605.5H993" stroke="#dce8f4" stroke-width="1"/>
 <path d="M624.5 606V629M686.5 606V629M747.5 606V629M809.5 606V629M870.5 606V629M931.5 606V629" stroke="#d8d8d8" stroke-width="1"/>
 <path d="M799 629C804 625 808 622 816 621.8C824 622 828 625 833 629Z" fill="#92dba6"/>
</svg>
<div class="a" style="left:951px;top:585.5px;font-size:9.5px;color:#8a8a8a;letter-spacing:-0.3px">solar</div>
<svg class="a" style="left:969px;top:586px" width="26" height="11" viewBox="0 0 26 11"><path d="M3.5 1H24.5L22.5 10H1.5Z" fill="#ff9c9c"/></svg>
<div class="a" style="left:972px;top:585.5px;font-size:9.5px;color:#fff;letter-spacing:-0.4px">edge</div>

<!-- taskbar -->
<div class="a" style="left:568px;top:629px;width:440px;height:9px;background:linear-gradient(#002a8a,#0038b0)"></div>
</body></html>
